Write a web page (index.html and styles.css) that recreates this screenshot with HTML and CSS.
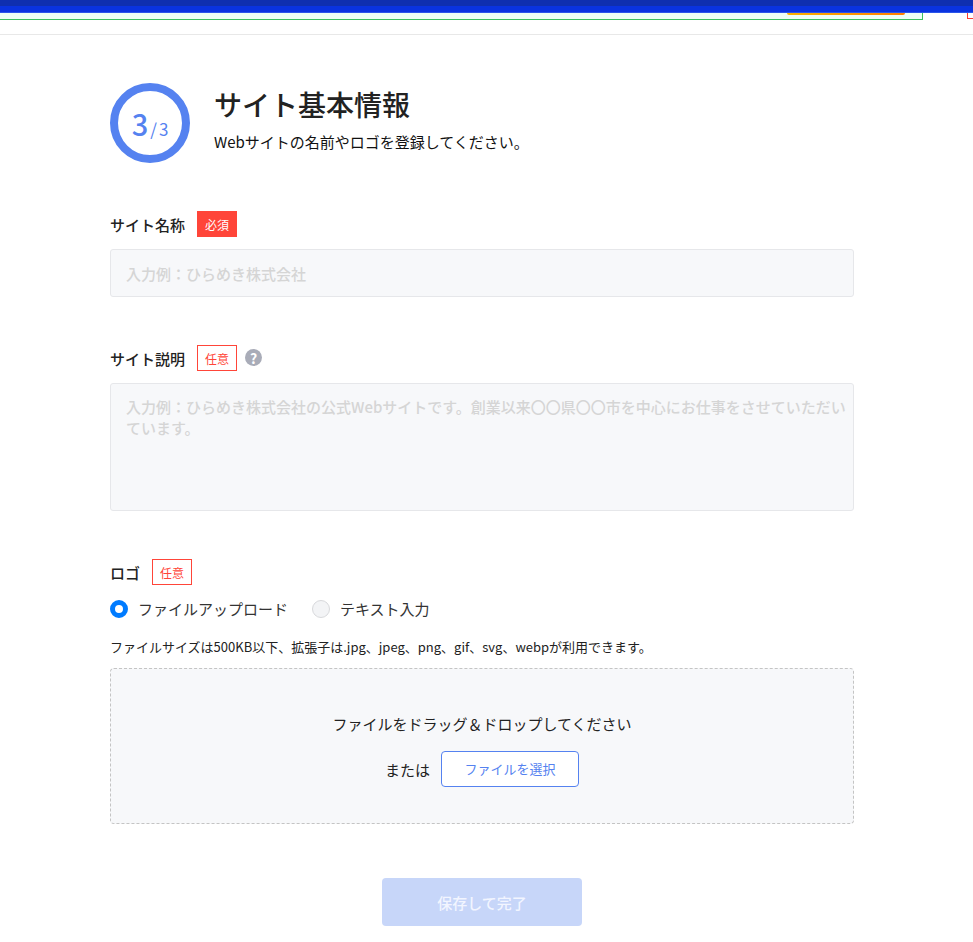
FILE: index.html
```html
<!DOCTYPE html>
<html lang="ja">
<head>
<meta charset="utf-8">
<title>サイト基本情報</title>
<link rel="stylesheet" href="styles.css">
</head>
<body>
<header class="topbar">
  <div class="band-dark"></div>
  <div class="band-blue"></div>
  <div class="sub">
    <div class="notice"><span class="notice-btn"></span></div>
    <span class="red-box"></span>
  </div>
</header>
<main class="page">
  <section class="head">
    <div class="ring"><span class="big">3</span><span class="slash">/</span><span class="small">3</span></div>
    <div class="head-text">
      <h1>サイト基本情報</h1>
      <p>Webサイトの名前やロゴを登録してください。</p>
    </div>
  </section>
  <section class="field f-name">
    <div class="label-row"><label>サイト名称</label><span class="tag req">必須</span></div>
    <div class="input">入力例：ひらめき株式会社</div>
  </section>
  <section class="field f-desc">
    <div class="label-row"><label>サイト説明</label><span class="tag opt">任意</span><span class="help">?</span></div>
    <div class="textarea">入力例：ひらめき株式会社の公式Webサイトです。創業以来〇〇県〇〇市を中心にお仕事をさせていただいています。</div>
  </section>
  <section class="field f-logo">
    <div class="label-row"><label>ロゴ</label><span class="tag opt">任意</span></div>
    <div class="radios">
      <span class="radio"><i class="dot on"></i>ファイルアップロード</span>
      <span class="radio"><i class="dot"></i>テキスト入力</span>
    </div>
    <p class="hint">ファイルサイズは500KB以下、拡張子は.jpg、jpeg、png、gif、svg、webpが利用できます。</p>
    <div class="drop">
      <p>ファイルをドラッグ＆ドロップしてください</p>
      <div class="drop-row"><span>または</span><span class="pick">ファイルを選択</span></div>
    </div>
  </section>
  <div class="actions"><span class="save">保存して完了</span></div>
</main>
</body>
</html>
```
FILE: styles.css
```css
* { box-sizing: border-box; }
html, body { margin: 0; padding: 0; }
body {
  background: #fff;
  color: #222;
  font-family: "Noto Sans CJK JP", "Noto Sans", sans-serif;
  font-size: 14px;
  height: 942px;
  overflow: hidden;
}
.topbar { height: 35px; border-bottom: 1px solid #e8e8e8; overflow: hidden; }
.band-dark { height: 6px; background: #0f2fb0; }
.band-blue { height: 7px; background: #0a33e0; border-bottom: 1px solid #2a55ea; }
.sub { display: flex; height: 7px; }
.notice {
  width: 923px; height: 7px;
  background: #edfff5;
  border-right: 1px solid #3cbf60;
  border-bottom: 1px solid #3cbf60;
  display: flex; justify-content: flex-end; padding-right: 17px;
}
.notice-btn { width: 118px; height: 2px; border-radius: 0 0 2px 2px; background: linear-gradient(90deg, #f9b000, #ff7f00); }
.red-box { margin-left: 44px; width: 6px; height: 6px; border-left: 1px solid #ff3b30; border-bottom: 1px solid #ff3b30; }
.page { width: 744px; margin-left: 110px; }
.head { display: flex; margin-top: 48px; height: 80px; }
.ring {
  width: 80px; height: 80px; border-radius: 50%;
  border: 8px solid #5582f0;
  color: #5582f0;
  display: flex; align-items: baseline; justify-content: center;
  line-height: 64px;
}
.big { font-size: 29px; font-weight: 500; }
.slash { font-size: 17px; font-weight: 400; margin-left: 2px; }
.small { font-size: 17px; font-weight: 400; margin-left: 2px; }
.head-text { margin-left: 24px; margin-top: -1px; }
h1 { margin: 0; font-size: 28px; font-weight: 500; line-height: 44px; color: #222; }
.head-text p { margin: 5px 0 0; font-size: 15px; line-height: 22px; color: #111; }
.label-row { display: flex; align-items: center; height: 26px; }
label { font-size: 15px; font-weight: 500; color: #222; }
.tag {
  width: 40px; height: 26px; margin-left: 12px;
  font-size: 12px; display: flex; align-items: center; justify-content: center;
}
.req { background: #ff4539; color: #fff; }
.opt { border: 1px solid #ff4539; color: #ff4539; }
.help {
  width: 17px; height: 17px; margin-left: 8px; border-radius: 50%;
  background: #a9acb8; color: #fff; font-size: 14px; font-weight: 700;
  display: flex; align-items: center; justify-content: center; margin-top: -1px;
}
.f-name { margin-top: 48px; }
.input, .textarea {
  background: #f7f8fa; border: 1px solid #e6e7ea; border-radius: 3px;
  color: #d5d5d5; font-size: 15px; font-weight: 500; padding: 0 6px 0 15px;
}
.input { margin-top: 12px; height: 48px; line-height: 48px; }
.f-desc { margin-top: 48px; }
.textarea { margin-top: 12px; height: 128px; padding-top: 12px; line-height: 21px; }
.f-logo { margin-top: 48px; }
.radios { display: flex; margin-top: 11px; height: 24px; align-items: center; gap: 24px; font-size: 15px; color: #333; }
.radio { display: flex; align-items: center; gap: 10px; }
.dot { width: 18px; height: 18px; margin-top: 1px; border-radius: 50%; background: #f3f4f6; border: 1px solid #d8d9dc; }
.dot.on { background: #fff; border: 5px solid #007bff; }
.hint { margin: 17px 0 0; font-size: 13px; line-height: 20px; color: #222; }
.drop {
  margin-top: 11px; height: 156px;
  background: #f7f8fa; border: 1px dashed #c4c4c4; border-radius: 4px;
  text-align: center; padding-top: 44px;
}
.drop p { margin: 0; font-size: 15px; line-height: 22px; }
.drop-row { display: flex; justify-content: center; align-items: center; gap: 11px; margin-top: 16px; font-size: 15px; }
.pick {
  width: 138px; height: 36px; padding-bottom: 2px; background: #fff; border: 1px solid #5582f0; border-radius: 4px;
  color: #5582f0; font-size: 13px; display: flex; align-items: center; justify-content: center;
}
.actions { display: flex; justify-content: center; margin-top: 54px; }
.save {
  width: 200px; height: 48px; border-radius: 4px; background: #c7d6f9; color: #f2f5ff;
  font-size: 15px; font-weight: 500; display: flex; align-items: center; justify-content: center;
}
```
